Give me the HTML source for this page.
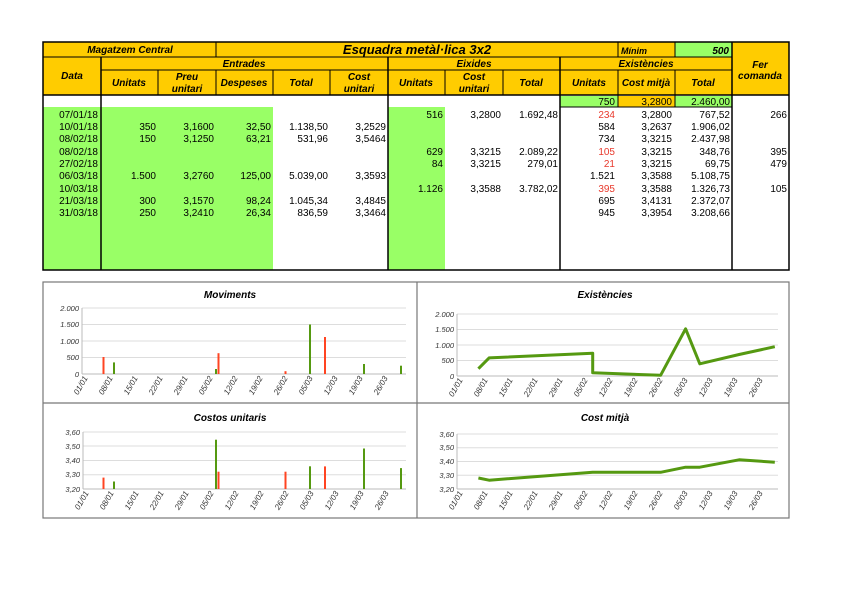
<!DOCTYPE html>
<html><head><meta charset="utf-8"><style>
html,body{margin:0;padding:0;background:#fff;}
svg{display:block;font-family:"Liberation Sans",sans-serif;}
.h{font-weight:bold;font-style:italic;font-size:10px;fill:#000;}
.d{font-size:10px;fill:#000;}
.r{fill:#e8392c;}
.ax{font-size:7.5px;font-style:italic;fill:#333;}
.t{font-weight:bold;font-style:italic;font-size:10px;}
</style></head><body>
<svg width="848" height="599" viewBox="0 0 848 599" xmlns="http://www.w3.org/2000/svg">
<rect x="43" y="42" width="746" height="53" fill="#ffcc00"/>
<rect x="675" y="42" width="57" height="15" fill="#99ff66"/>
<rect x="43" y="107" width="230" height="163" fill="#99ff66"/>
<rect x="388" y="107" width="57" height="163" fill="#99ff66"/>
<rect x="560" y="96" width="58" height="11" fill="#99ff66"/>
<rect x="618" y="96" width="57" height="11" fill="#ffcc00"/>
<rect x="675" y="96" width="57" height="11" fill="#99ff66"/>
<g stroke="#000" fill="none">
<rect x="43" y="42" width="746" height="228" stroke-width="1.5"/>
<line x1="43" y1="57" x2="732" y2="57"/>
<line x1="101" y1="70" x2="732" y2="70"/>
<line x1="43" y1="95" x2="789" y2="95" stroke-width="1.5"/>
<line x1="216" y1="42" x2="216" y2="57"/>
<line x1="618" y1="42" x2="618" y2="57"/>
<line x1="675" y1="42" x2="675" y2="57"/>
<line x1="732" y1="42" x2="732" y2="270" stroke-width="1.5"/>
<line x1="101" y1="57" x2="101" y2="270" stroke-width="1.5"/>
<line x1="388" y1="57" x2="388" y2="270" stroke-width="1.5"/>
<line x1="560" y1="57" x2="560" y2="270" stroke-width="1.5"/>
<line x1="158" y1="70" x2="158" y2="95"/>
<line x1="216" y1="70" x2="216" y2="95"/>
<line x1="273" y1="70" x2="273" y2="95"/>
<line x1="330" y1="70" x2="330" y2="95"/>
<line x1="445" y1="70" x2="445" y2="95"/>
<line x1="503" y1="70" x2="503" y2="95"/>
<line x1="618" y1="70" x2="618" y2="107"/>
<line x1="675" y1="70" x2="675" y2="107"/>
<line x1="560" y1="107" x2="732" y2="107"/>
</g>
<g class="h" text-anchor="middle">
<text x="130" y="53">Magatzem Central</text>
<text x="417" y="54" style="font-size:13px">Esquadra metàl·lica 3x2</text>
<text x="621" y="54" text-anchor="start" style="font-size:9px">Mínim</text>
<text x="729" y="54" text-anchor="end">500</text>
<text x="760" y="68">Fer</text>
<text x="760" y="79">comanda</text>
<text x="72" y="79">Data</text>
<text x="244" y="67">Entrades</text>
<text x="474" y="67">Eixides</text>
<text x="646" y="67">Existències</text>
<text x="129" y="86">Unitats</text>
<text x="187" y="80">Preu</text><text x="187" y="92">unitari</text>
<text x="244" y="86">Despeses</text>
<text x="301" y="86">Total</text>
<text x="359" y="80">Cost</text><text x="359" y="92">unitari</text>
<text x="416" y="86">Unitats</text>
<text x="474" y="80">Cost</text><text x="474" y="92">unitari</text>
<text x="531" y="86">Total</text>
<text x="589" y="86">Unitats</text>
<text x="646" y="86">Cost mitjà</text>
<text x="703" y="86">Total</text>
</g>
<g class="d" text-anchor="end">
<text x="615" y="105">750</text><text x="672" y="105">3,2800</text><text x="730" y="105">2.460,00</text>
<text x="98" y="118">07/01/18</text><text x="443" y="118">516</text><text x="501" y="118">3,2800</text><text x="558" y="118">1.692,48</text><text x="615" y="118" class="r">234</text><text x="672" y="118">3,2800</text><text x="730" y="118">767,52</text><text x="787" y="118">266</text>
<text x="98" y="130">10/01/18</text><text x="156" y="130">350</text><text x="214" y="130">3,1600</text><text x="271" y="130">32,50</text><text x="328" y="130">1.138,50</text><text x="386" y="130">3,2529</text><text x="615" y="130">584</text><text x="672" y="130">3,2637</text><text x="730" y="130">1.906,02</text>
<text x="98" y="142">08/02/18</text><text x="156" y="142">150</text><text x="214" y="142">3,1250</text><text x="271" y="142">63,21</text><text x="328" y="142">531,96</text><text x="386" y="142">3,5464</text><text x="615" y="142">734</text><text x="672" y="142">3,3215</text><text x="730" y="142">2.437,98</text>
<text x="98" y="155">08/02/18</text><text x="443" y="155">629</text><text x="501" y="155">3,3215</text><text x="558" y="155">2.089,22</text><text x="615" y="155" class="r">105</text><text x="672" y="155">3,3215</text><text x="730" y="155">348,76</text><text x="787" y="155">395</text>
<text x="98" y="167">27/02/18</text><text x="443" y="167">84</text><text x="501" y="167">3,3215</text><text x="558" y="167">279,01</text><text x="615" y="167" class="r">21</text><text x="672" y="167">3,3215</text><text x="730" y="167">69,75</text><text x="787" y="167">479</text>
<text x="98" y="179">06/03/18</text><text x="156" y="179">1.500</text><text x="214" y="179">3,2760</text><text x="271" y="179">125,00</text><text x="328" y="179">5.039,00</text><text x="386" y="179">3,3593</text><text x="615" y="179">1.521</text><text x="672" y="179">3,3588</text><text x="730" y="179">5.108,75</text>
<text x="98" y="192">10/03/18</text><text x="443" y="192">1.126</text><text x="501" y="192">3,3588</text><text x="558" y="192">3.782,02</text><text x="615" y="192" class="r">395</text><text x="672" y="192">3,3588</text><text x="730" y="192">1.326,73</text><text x="787" y="192">105</text>
<text x="98" y="204">21/03/18</text><text x="156" y="204">300</text><text x="214" y="204">3,1570</text><text x="271" y="204">98,24</text><text x="328" y="204">1.045,34</text><text x="386" y="204">3,4845</text><text x="615" y="204">695</text><text x="672" y="204">3,4131</text><text x="730" y="204">2.372,07</text>
<text x="98" y="216">31/03/18</text><text x="156" y="216">250</text><text x="214" y="216">3,2410</text><text x="271" y="216">26,34</text><text x="328" y="216">836,59</text><text x="386" y="216">3,3464</text><text x="615" y="216">945</text><text x="672" y="216">3,3954</text><text x="730" y="216">3.208,66</text>
</g>

<g stroke="#777" fill="none" stroke-width="1.2">
<rect x="43" y="282" width="746" height="236"/>
<line x1="43" y1="403" x2="789" y2="403"/>
<line x1="417" y1="282" x2="417" y2="518"/>
</g>
<g class="t" text-anchor="middle">
<text x="230" y="298">Moviments</text>
<text x="605" y="298">Existències</text>
<text x="230" y="421">Costos unitaris</text>
<text x="605" y="421">Cost mitjà</text>
</g>
<g stroke="#ddd" stroke-width="1">
<line x1="82" y1="308" x2="406" y2="308"/><line x1="82" y1="324.5" x2="406" y2="324.5"/><line x1="82" y1="341" x2="406" y2="341"/><line x1="82" y1="357.5" x2="406" y2="357.5"/>
<line x1="83" y1="432" x2="406" y2="432"/><line x1="83" y1="446" x2="406" y2="446"/><line x1="83" y1="460.5" x2="406" y2="460.5"/><line x1="83" y1="474.7" x2="406" y2="474.7"/>
<line x1="457" y1="314" x2="778" y2="314"/><line x1="457" y1="329.5" x2="778" y2="329.5"/><line x1="457" y1="345" x2="778" y2="345"/><line x1="457" y1="360.5" x2="778" y2="360.5"/>
<line x1="457" y1="434" x2="778" y2="434"/><line x1="457" y1="447.75" x2="778" y2="447.75"/><line x1="457" y1="461.5" x2="778" y2="461.5"/><line x1="457" y1="475.25" x2="778" y2="475.25"/>
</g>
<g stroke="#bbb" stroke-width="1">
<line x1="82" y1="308" x2="82" y2="374"/><line x1="82" y1="374" x2="406" y2="374"/>
<line x1="83" y1="432" x2="83" y2="489"/><line x1="83" y1="489" x2="406" y2="489"/>
<line x1="457" y1="314" x2="457" y2="376"/><line x1="457" y1="376" x2="778" y2="376"/>
<line x1="457" y1="434" x2="457" y2="489"/><line x1="457" y1="489" x2="778" y2="489"/>
</g>
<g class="ax" text-anchor="end">
<text x="79" y="311">2.000</text><text x="79" y="327">1.500</text><text x="79" y="344">1.000</text><text x="79" y="360">500</text><text x="79" y="377">0</text>
<text x="80" y="435">3,60</text><text x="80" y="449">3,50</text><text x="80" y="463">3,40</text><text x="80" y="477">3,30</text><text x="80" y="492">3,20</text>
<text x="454" y="317">2.000</text><text x="454" y="332">1.500</text><text x="454" y="348">1.000</text><text x="454" y="363">500</text><text x="454" y="379">0</text>
<text x="454" y="437">3,60</text><text x="454" y="450">3,50</text><text x="454" y="464">3,40</text><text x="454" y="478">3,30</text><text x="454" y="492">3,20</text>
</g>
<g class="ax" text-anchor="end" style="font-size:8px">
<g transform="translate(4,378)">
<text transform="translate(84,0) rotate(-60)">01/01</text><text transform="translate(109,0) rotate(-60)">08/01</text><text transform="translate(134,0) rotate(-60)">15/01</text><text transform="translate(159,0) rotate(-60)">22/01</text><text transform="translate(184,0) rotate(-60)">29/01</text><text transform="translate(209,0) rotate(-60)">05/02</text><text transform="translate(234,0) rotate(-60)">12/02</text><text transform="translate(259,0) rotate(-60)">19/02</text><text transform="translate(284,0) rotate(-60)">26/02</text><text transform="translate(309,0) rotate(-60)">05/03</text><text transform="translate(334,0) rotate(-60)">12/03</text><text transform="translate(359,0) rotate(-60)">19/03</text><text transform="translate(384,0) rotate(-60)">26/03</text>
</g>
<g transform="translate(5,493)">
<text transform="translate(84,0) rotate(-60)">01/01</text><text transform="translate(109,0) rotate(-60)">08/01</text><text transform="translate(134,0) rotate(-60)">15/01</text><text transform="translate(159,0) rotate(-60)">22/01</text><text transform="translate(184,0) rotate(-60)">29/01</text><text transform="translate(209,0) rotate(-60)">05/02</text><text transform="translate(234,0) rotate(-60)">12/02</text><text transform="translate(259,0) rotate(-60)">19/02</text><text transform="translate(284,0) rotate(-60)">26/02</text><text transform="translate(309,0) rotate(-60)">05/03</text><text transform="translate(334,0) rotate(-60)">12/03</text><text transform="translate(359,0) rotate(-60)">19/03</text><text transform="translate(384,0) rotate(-60)">26/03</text>
</g>
<g transform="translate(379,380)">
<text transform="translate(84,0) rotate(-60)">01/01</text><text transform="translate(109,0) rotate(-60)">08/01</text><text transform="translate(134,0) rotate(-60)">15/01</text><text transform="translate(159,0) rotate(-60)">22/01</text><text transform="translate(184,0) rotate(-60)">29/01</text><text transform="translate(209,0) rotate(-60)">05/02</text><text transform="translate(234,0) rotate(-60)">12/02</text><text transform="translate(259,0) rotate(-60)">19/02</text><text transform="translate(284,0) rotate(-60)">26/02</text><text transform="translate(309,0) rotate(-60)">05/03</text><text transform="translate(334,0) rotate(-60)">12/03</text><text transform="translate(359,0) rotate(-60)">19/03</text><text transform="translate(384,0) rotate(-60)">26/03</text>
</g>
<g transform="translate(379,493)">
<text transform="translate(84,0) rotate(-60)">01/01</text><text transform="translate(109,0) rotate(-60)">08/01</text><text transform="translate(134,0) rotate(-60)">15/01</text><text transform="translate(159,0) rotate(-60)">22/01</text><text transform="translate(184,0) rotate(-60)">29/01</text><text transform="translate(209,0) rotate(-60)">05/02</text><text transform="translate(234,0) rotate(-60)">12/02</text><text transform="translate(259,0) rotate(-60)">19/02</text><text transform="translate(284,0) rotate(-60)">26/02</text><text transform="translate(309,0) rotate(-60)">05/03</text><text transform="translate(334,0) rotate(-60)">12/03</text><text transform="translate(359,0) rotate(-60)">19/03</text><text transform="translate(384,0) rotate(-60)">26/03</text>
</g>
</g>
<g fill="#ff4422">
<rect x="102.5" y="357" width="2" height="17"/>
<rect x="217.5" y="353.2" width="2" height="20.8"/>
<rect x="284.5" y="371.2" width="2" height="2.8"/>
<rect x="324" y="337" width="2" height="37"/>
<rect x="102.5" y="477.6" width="2" height="11.4"/>
<rect x="217.5" y="471.7" width="2" height="17.3"/>
<rect x="284.5" y="471.7" width="2" height="17.3"/>
<rect x="324" y="466.4" width="2" height="22.6"/>
</g>
<g fill="#559911">
<rect x="113" y="362.4" width="2" height="11.6"/>
<rect x="215" y="369" width="2" height="5"/>
<rect x="309" y="324.5" width="2" height="49.5"/>
<rect x="363" y="364" width="2" height="10"/>
<rect x="400" y="365.7" width="2" height="8.3"/>
<rect x="113" y="481.5" width="2" height="7.5"/>
<rect x="215" y="439.7" width="2" height="49.3"/>
<rect x="309" y="466.3" width="2" height="22.7"/>
<rect x="363" y="448.5" width="2" height="40.5"/>
<rect x="400" y="468.1" width="2" height="20.9"/>
</g>
<polyline fill="none" stroke="#559911" stroke-width="3" stroke-linejoin="round" points="478.4,368.7 489.1,357.9 592.7,353.2 592.7,372.7 660.6,375.3 685.6,328.8 699.8,363.8 739.1,354.5 774.8,346.7"/>
<polyline fill="none" stroke="#559911" stroke-width="3" stroke-linejoin="round" points="478.4,478 489.1,480.2 592.7,472.3 660.6,472.3 685.6,467.2 699.8,467.2 739.1,459.8 774.8,462.2"/>
</svg>
</body></html>
